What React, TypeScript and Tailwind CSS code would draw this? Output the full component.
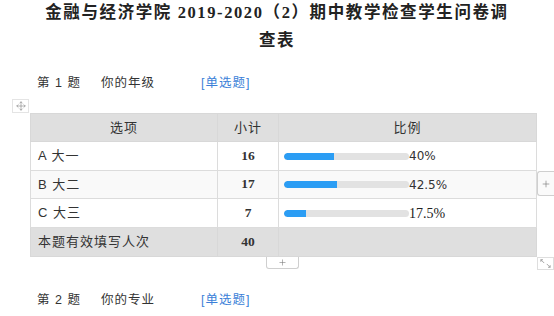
import { Move, Plus } from "lucide-react";

type Row = { label: string; count: number; pct: number; pctText: string; serif?: boolean };

const rows: Row[] = [
  { label: "A 大一", count: 16, pct: 40, pctText: "40%" },
  { label: "B 大二", count: 17, pct: 42.5, pctText: "42.5%" },
  { label: "C 大三", count: 7, pct: 17.5, pctText: "17.5%", serif: true },
];

const cjk = "font-['Liberation_Sans','Noto_Sans_CJK_SC',sans-serif]";

function QuestionTitle({ no, text }: { no: number; text: string }) {
  return (
    <div className={`flex h-[20px] items-center pl-[37px] text-[12.5px] tracking-[1px] text-[#333] ${cjk}`}>
      <span className="w-[64px]">第 {no} 题</span>
      <span className="w-[100px]">{text}</span>
      <span className="text-[#3b7fd8]">[单选题]</span>
    </div>
  );
}

export default function App() {
  return (
    <div className="relative h-[316px] w-[554px] overflow-hidden bg-white">
      <div className="mt-[-1px] text-center font-['Liberation_Serif','Noto_Sans_CJK_SC',serif] text-[16.5px] font-bold leading-[28px] tracking-[1.6px] text-[#222]">
        <p>金融与经济学院 2019-2020（2）期中教学检查学生问卷调</p>
        <p>查表</p>
      </div>

      <div className="mt-[18px]">
        <QuestionTitle no={1} text="你的年级" />
      </div>

      <div className="relative mt-[6px] pl-[30px]">
        <div className="ml-[-18px] flex h-[14px] w-[17px] items-center justify-center border border-[#e4e4e4] bg-white">
          <Move className="h-[10px] w-[10px] text-[#888]" strokeWidth={1.5} />
        </div>

        <table className={`w-[506px] table-fixed border-collapse text-[13px] tracking-[1px] text-[#333] ${cjk}`}>
          <colgroup>
            <col className="w-[187px]" />
            <col className="w-[61px]" />
            <col className="w-[258px]" />
          </colgroup>
          <thead>
            <tr className="h-[28px] bg-[#dfdfdf]">
              <th className="border border-[#d8d8d8] font-normal">选项</th>
              <th className="border border-[#d8d8d8] font-normal">小计</th>
              <th className="border border-[#d8d8d8] font-normal">比例</th>
            </tr>
          </thead>
          <tbody>
            {rows.map((r, i) => (
              <tr key={r.label} className={i === 1 ? "h-[28px] bg-[#f9f9f9]" : "h-[29px] bg-white"}>
                <td className="border border-[#dcdcdc] pl-[7px]">{r.label}</td>
                <td className="border border-[#dcdcdc] text-center font-['Liberation_Serif',serif] text-[13.5px] font-bold tracking-normal">
                  {r.count}
                </td>
                <td className="border border-[#dcdcdc] pl-[5px]">
                  <div className="flex items-center">
                    <div className="h-[7px] w-[125px] overflow-hidden rounded-full bg-[#e2e2e2]">
                      <div className="h-full rounded-l-full bg-[#2b9df4]" style={{ width: `${r.pct}%` }} />
                    </div>
                    <span
                      className={
                        r.serif
                          ? "font-['Liberation_Serif',serif] text-[14px] tracking-normal text-[#222]"
                          : "font-['DejaVu_Sans',sans-serif] text-[12px] tracking-normal text-[#333]"
                      }
                    >
                      {r.pctText}
                    </span>
                  </div>
                </td>
              </tr>
            ))}
            <tr className="h-[29px] bg-[#dfdfdf]">
              <td className="border border-[#d8d8d8] pl-[7px]">本题有效填写人次</td>
              <td className="border border-[#d8d8d8] text-center font-['Liberation_Serif',serif] text-[13.5px] font-bold tracking-normal">
                40
              </td>
              <td className="border border-[#d8d8d8]" />
            </tr>
          </tbody>
        </table>

        <div className="ml-[236px] flex h-[12px] w-[33px] items-center justify-center rounded-b-[3px] border border-t-0 border-[#cfcfcf] bg-white">
          <Plus className="h-[9px] w-[9px] text-[#777]" strokeWidth={1.5} />
        </div>

        <div className="absolute left-[537px] top-[72px] flex h-[25px] w-[17px] items-center justify-center rounded-l-[3px] border border-r-0 border-[#cfcfcf] bg-[#fafafa]">
          <Plus className="h-[10px] w-[10px] text-[#777]" strokeWidth={1.5} />
        </div>

        <div className="absolute left-[537px] top-[158px] h-[13px] w-[17px] border border-[#dedede] bg-white text-[#999]">
          <svg viewBox="0 0 17 13" className="h-full w-full" fill="none" stroke="currentColor" strokeWidth="1">
            <path d="M3 2 L7 6 M3 2 L3 4.5 M3 2 L5.5 2" />
            <path d="M14 11 L10 7 M14 11 L14 8.5 M14 11 L11.5 11" />
          </svg>
        </div>
      </div>

      <div className="mt-[21px]">
        <QuestionTitle no={2} text="你的专业" />
      </div>
    </div>
  );
}
